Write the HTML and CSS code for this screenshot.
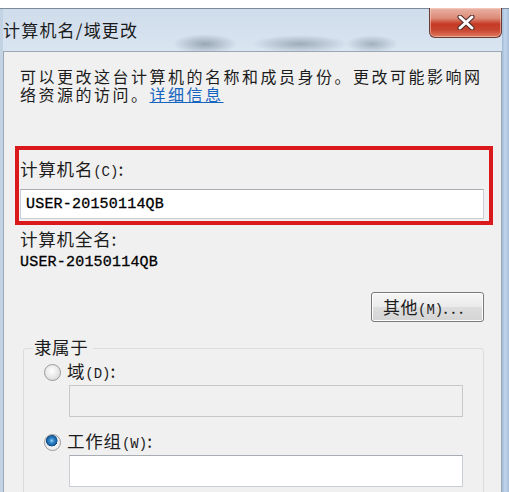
FILE: index.html
```html
<!DOCTYPE html>
<html lang="zh-CN">
<head>
<meta charset="utf-8">
<title>计算机名/域更改</title>
<link rel="stylesheet" href="styles.css">
</head>
<body>
<div class="topgap"></div>
<div class="frame">
  <div class="titlebar">
    <div class="title">计算机名/域更改</div>
    <div class="close" aria-label="关闭">
      <svg width="18" height="15" viewBox="0 0 18 15">
        <path d="M3 2 L15 13 M15 2 L3 13" stroke="#4a2a2a" stroke-width="5" stroke-linecap="round"/>
        <path d="M3 2 L15 13 M15 2 L3 13" stroke="#ffffff" stroke-width="3" stroke-linecap="round"/>
      </svg>
    </div>
  </div>
  <div class="panel">
    <p class="desc">可以更改这台计算机的名称和成员身份。更改可能影响网络资源的访问。<a class="link" href="#">详细信息</a></p>

    <div class="highlight">
      <div class="label">计算机名<span class="key">(C)</span>:</div>
      <div class="input"><span class="mono">USER-20150114QB</span></div>
    </div>

    <div class="label full">计算机全名:</div>
    <div class="mono fullname">USER-20150114QB</div>

    <div class="btnrow">
      <div class="button">其他<span class="key">(M)</span><span class="dots">...</span></div>
    </div>

    <div class="group">
      <div class="legend">隶属于</div>
      <div class="radio-row">
        <span class="radio"></span>
        <span class="rlabel">域<span class="key">(D)</span>:</span>
      </div>
      <div class="input disabled"></div>
      <div class="radio-row second">
        <span class="radio checked"></span>
        <span class="rlabel">工作组<span class="key">(W)</span>:</span>
      </div>
      <div class="input"></div>
    </div>
  </div>
</div>
</body>
</html>
```
FILE: styles.css
```css
* { box-sizing: border-box; }
html, body {
  margin: 0;
  padding: 0;
  width: 509px;
  height: 492px;
  overflow: hidden;
  background: #ffffff;
  font-family: "Noto Sans CJK SC", "Noto Sans", sans-serif;
  color: #1c1c1c;
}
.topgap { height: 8px; background: #ffffff; }
.frame {
  height: 484px;
  display: flex;
  flex-direction: column;
  border-top: 1px solid #7d8c9c;
  padding: 0 7px 0 3px;
  background:
    radial-gradient(ellipse 32px 10px at 205px 35px, rgba(110,125,140,0.6), rgba(110,125,140,0) 100%),
    radial-gradient(ellipse 48px 9px at 300px 35px, rgba(110,125,140,0.55), rgba(110,125,140,0) 100%),
    radial-gradient(ellipse 26px 9px at 372px 35px, rgba(110,125,140,0.5), rgba(110,125,140,0) 100%),
    linear-gradient(90deg, #c3d3e4 0px, #c3d3e4 3px, transparent 3px),
    linear-gradient(90deg, transparent 502px, #9fb9d6 502px, #c2d6ec 505px, #a6bfda 509px),
    linear-gradient(180deg, #cfdcea 0%, #dbe6f2 10%, #d5e2ef 100%);
}
.titlebar {
  height: 42px;
  display: flex;
  align-items: flex-start;
  justify-content: space-between;
  flex: none;
}
.title {
  padding-top: 11px;
  font-size: 17px;
  line-height: 20px;
  letter-spacing: 1.2px;
  color: #1a1a1a;
}
.close {
  width: 73px;
  height: 30px;
  margin-top: -1px;
  border: 1px solid #6a3a35;
  border-top: none;
  border-radius: 0 0 6px 6px;
  background: linear-gradient(180deg, #e9b3a6 0%, #dc8b77 35%, #c63a25 55%, #c8442e 75%, #de7a5f 100%);
  display: flex;
  align-items: center;
  justify-content: center;
  box-shadow: inset 0 0 0 1px rgba(255,220,210,0.5);
}
.panel {
  flex: 1;
  overflow: hidden;
  background: #f0f0f0;
  border: 1px solid #9aa8b6;
  border-bottom: none;
  padding: 17px 17px 0 16px;
}
.desc {
  margin: 0;
  font-family: "Liberation Sans", "Noto Sans CJK SC", sans-serif;
  font-size: 16px;
  line-height: 18px;
  letter-spacing: 2.5px;
  width: 480px;
  color: #1c1c1c;
}
.link { color: #1565c0; text-decoration: underline; }
.highlight {
  margin: 41px 0 0 -5px;
  width: 478px;
  border: 4px solid #d9191c;
  padding: 9px 0 2px 1px;
}
.label {
  font-size: 17.5px;
  line-height: 20px;
  letter-spacing: 0.8px;
}
.key {
  font-family: "Liberation Mono", monospace;
  font-size: 14px;
  letter-spacing: 0;
}
.input {
  margin-top: 7px;
  width: 464px;
  height: 30px;
  background: #ffffff;
  border: 1px solid #c9ced5;
  border-top-color: #a8adb3;
  padding-left: 5px;
  display: flex;
  align-items: center;
}
.mono {
  font-family: "Liberation Mono", "DejaVu Sans Mono", monospace;
  font-size: 15px;
  letter-spacing: 0.2px;
  color: #000000;
  -webkit-text-stroke: 0.3px #000000;
}
.full { margin-top: 4px; }
.fullname { margin-top: 6px; line-height: 16px; }
.btnrow {
  display: flex;
  justify-content: flex-end;
  margin-top: 21px;
}
.button {
  width: 113px;
  height: 30px;
  border: 1px solid #7a7a7a;
  border-radius: 3px;
  background: linear-gradient(180deg, #f6f6f6 0%, #ebebeb 48%, #dddddd 52%, #d4d4d4 100%);
  box-shadow: inset 0 0 0 1px #fcfcfc;
  font-size: 17px;
  line-height: 28px;
  padding-left: 11px;
  letter-spacing: 0.5px;
}
.dots { letter-spacing: 3px; }
.group {
  margin: 26px 0 0 3px;
  width: 461px;
  height: 150px;
  border: 1px solid #dcdcdc;
  border-radius: 3px;
  padding: 0 0 0 20px;
}
.legend {
  margin: -12px 0 0 -11px;
  width: 60px;
  padding-left: 1px;
  background: #f0f0f0;
  font-size: 17.5px;
  line-height: 20px;
  letter-spacing: 0.6px;
}
.radio-row {
  display: flex;
  align-items: center;
  gap: 6px;
  margin-top: 5px;
  height: 20px;
}
.radio-row.second { margin-top: 15px; }
.radio {
  width: 17px;
  height: 17px;
  border-radius: 50%;
  border: 1px solid #9a9a9a;
  background: radial-gradient(circle at 45% 40%, #ffffff 0%, #e6e6e6 55%, #cfcfcf 100%);
  flex: none;
}
.radio.checked {
  background:
    radial-gradient(circle at 45% 38%, #9fd8ff 0px, #3a8fd0 2px, #125a9c 5px, #0d4a86 5.5px, transparent 6px),
    radial-gradient(circle, #ffffff 0%, #e4e4e4 100%);
}
.rlabel {
  font-size: 17.5px;
  line-height: 20px;
  letter-spacing: 0.8px;
}
.group .input {
  margin-top: 3px;
  margin-left: 25px;
  width: 394px;
  height: 32px;
}
.group .input.disabled {
  background: #f0f0f0;
  border-color: #c8c8c8;
}
```
